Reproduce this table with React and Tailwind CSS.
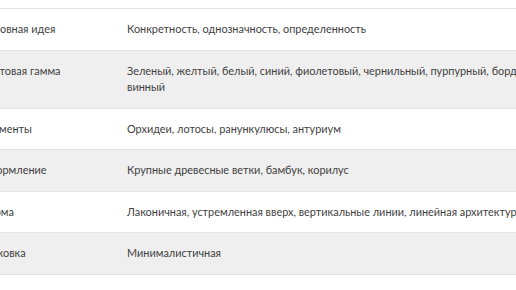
export default function App() {
  const rows = [
    ["Основная идея", "Конкретность, однозначность, определенность"],
    ["Цветовая гамма", "Зеленый, желтый, белый, синий, фиолетовый, чернильный, пурпурный, бордовый, винный"],
    ["Элементы", "Орхидеи, лотосы, ранункулюсы, антуриум"],
    ["Оформление", "Крупные древесные ветки, бамбук, корилус"],
    ["Форма", "Лаконичная, устремленная вверх, вертикальные линии, линейная архитектура"],
    ["Упаковка", "Минималистичная"],
  ];
  return (
    <div className="w-[516px] h-[290px] overflow-hidden bg-white" style={{ fontFamily: "Lato, 'Open Sans', sans-serif" }}>
      <div className="pt-[8px] ml-[-20px] w-[640px]">
        <div className="border-b border-[#e3e3e3]">
          {rows.map(([a, b], i) => (
            <div
              key={i}
              className={`flex border-t border-[#e3e3e3] text-[10.9px] leading-[16.5px] text-[#3f3f3f] ${i % 2 === 1 ? "bg-[#efefef]" : "bg-white"}`}
            >
              <div className="w-[147px] shrink-0 py-[12px]">{a}</div>
              <div className="w-[435px] shrink-0 py-[12px]">{b}</div>
            </div>
          ))}
        </div>
      </div>
    </div>
  );
}
